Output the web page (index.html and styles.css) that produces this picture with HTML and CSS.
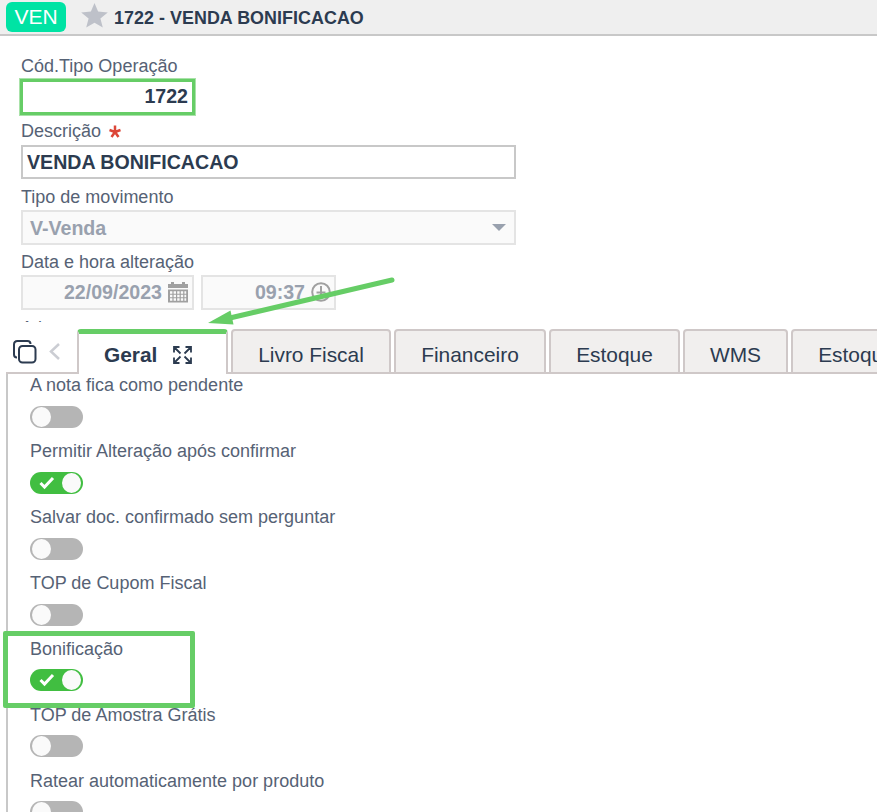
FILE: index.html
```html
<!DOCTYPE html>
<html lang="pt-BR">
<head>
<meta charset="utf-8">
<title>VENDA BONIFICACAO</title>
<link rel="stylesheet" href="styles.css">
</head>
<body>
<div class="page">
  <header class="topbar">
    <span class="badge"><span>VEN</span></span>
    <svg class="star" width="27" height="25" viewBox="0 0 27 25"><path d="M13.500 0 17.100 8.600 26.800 9.400 19.400 15.600 21.800 24.600 13.500 19.700 5.200 24.600 7.600 15.600 0.200 9.400 9.900 8.600Z" fill="#bec1c9"/></svg>
    <h1 class="title"><span>1722 - VENDA BONIFICACAO</span></h1>
  </header>

  <main class="form">
    <div class="field">
      <label class="label">Cód.Tipo Operação</label>
      <div class="input code"><span>1722</span></div>
    </div>
    <div class="field">
      <label class="label">Descrição
        <svg class="required" width="12" height="13" viewBox="0 0 12 13"><path d="M6 7V0.500M6 7 11.500 5M6 7 9.500 12M6 7 2.500 12M6 7 0.500 5" stroke="#dc4638" stroke-width="2.500" fill="none"/></svg>
      </label>
      <div class="input wide"><span>VENDA BONIFICACAO</span></div>
    </div>
    <div class="field">
      <label class="label">Tipo de movimento</label>
      <div class="input wide disabled select"><span>V-Venda</span>
        <svg width="14" height="7" viewBox="0 0 14 7"><path d="M0 0H14L7 7Z" fill="#99a1ae"/></svg>
      </div>
    </div>
    <div class="field">
      <label class="label">Data e hora alteração</label>
      <div class="pair">
        <div class="input disabled date"><span>22/09/2023</span>
          <svg width="20" height="21" viewBox="0 0 20 21"><path fill="#a0a0a0" d="M0 2H3V0H6V2H14V0H17V2H20V6H0ZM0 7.500H20V20.500H0Z"/><path stroke="#fafafa" stroke-width="2.400" stroke-dasharray="2.400 1.200" d="M2 10.500H18.200M2 14H18.200M2 17.500H18.200"/></svg>
        </div>
        <div class="input disabled time"><span>09:37</span>
          <svg width="20" height="20" viewBox="0 0 20 20"><circle cx="10" cy="10" r="8.800" fill="none" stroke="#a0a0a0" stroke-width="2"/><path d="M10 4V14M5.500 10.500H14.500" stroke="#a0a0a0" stroke-width="2"/></svg>
        </div>
      </div>
    </div>
    <div class="field"><label class="label">Ativo</label></div>
  </main>

  <nav class="tabs">
    <div class="tools">
      <svg width="24" height="24" viewBox="0 0 24 24" fill="none" stroke="#2c3b50" stroke-width="2"><rect x="6" y="6" width="16.500" height="16.500" rx="3.500"/><path d="M4 17.500C2 17.500 1 16.500 1 14.500V4.500C1 2.300 2.300 1 4.500 1H14.500C16.500 1 17.500 2 17.500 4"/></svg>
      <svg class="prev" width="11" height="17" viewBox="0 0 11 17" fill="none" stroke="#cbcdd3" stroke-width="2.500"><path d="M10 1 2 8.500 10 16"/></svg>
    </div>
    <div class="tab active"><span>Geral</span>
      <svg width="19" height="18" viewBox="0 0 19 18" fill="none" stroke="#2c3b50" stroke-width="1.800"><path d="M6.500 1H1V6.500M1 1 7.500 7.500M12.500 1H18V6.500M18 1 11.500 7.500M6.500 17H1V11.500M1 17 7.500 10.500M12.500 17H18V11.500M18 17 11.500 10.500"/></svg>
    </div>
    <div class="tab t-livro">Livro Fiscal</div>
    <div class="tab t-fin">Financeiro</div>
    <div class="tab t-est">Estoque</div>
    <div class="tab t-wms">WMS</div>
    <div class="tab t-last">Estoque</div>
  </nav>

  <section class="panel">
    <div class="option"><label class="label">A nota fica como pendente</label><div class="switch"><i></i></div></div>
    <div class="option"><label class="label">Permitir Alteração após confirmar</label><div class="switch on"><svg width="16" height="14" viewBox="0 0 16 14"><path d="M1.500 7 5.500 11 14 2" fill="none" stroke="#fff" stroke-width="3"/></svg><i></i></div></div>
    <div class="option"><label class="label">Salvar doc. confirmado sem perguntar</label><div class="switch"><i></i></div></div>
    <div class="option"><label class="label">TOP de Cupom Fiscal</label><div class="switch"><i></i></div></div>
    <div class="option"><label class="label">Bonificação</label><div class="switch on"><svg width="16" height="14" viewBox="0 0 16 14"><path d="M1.500 7 5.500 11 14 2" fill="none" stroke="#fff" stroke-width="3"/></svg><i></i></div></div>
    <div class="option"><label class="label">TOP de Amostra Grátis</label><div class="switch"><i></i></div></div>
    <div class="option"><label class="label">Ratear automaticamente por produto</label><div class="switch"><i></i></div></div>
  </section>

  <div class="highlight"></div>
  <svg class="arrow" width="190" height="52" viewBox="0 0 190 52"><path d="M184 7 24 44.500" stroke="#66cd66" stroke-width="5" stroke-linecap="round"/><path d="M0 50 22.500 37.500 25.500 51.500Z" fill="#66cd66"/></svg>
</div>
</body>
</html>
```

FILE: styles.css
```css
* { box-sizing: border-box; }
body {
  margin: 0;
  background: #fff;
  font-family: "Liberation Sans", Arial, sans-serif;
  color: #2c3b50;
}
svg { flex: none; display: block; }
.page {
  position: relative;
  height: 812px;
  overflow: hidden;
  display: flex;
  flex-direction: column;
}

/* Top bar */
.topbar {
  flex: none;
  height: 36px;
  display: flex;
  align-items: flex-start;
  background: #efefef;
  border-bottom: 2px solid #c8c8c8;
}
.badge {
  width: 60px;
  height: 30px;
  margin: 2px 0 0 6px;
  border-radius: 6px;
  background: #00e3a4;
  color: #fff;
  font-size: 21px;
  line-height: 30px;
  text-align: center;
}
.star { margin: 3px 0 0 15px; }
.title {
  margin: 7px 0 0 6px;
  font-size: 17.900px;
  letter-spacing: 0.04px;
  line-height: 22px;
  white-space: nowrap;
}

/* Form */
.form {
  flex: none;
  height: 286px;
  padding: 17.500px 0 0 21px;
  overflow: hidden;
}
.field { height: 65.500px; }
.label {
  display: flex;
  align-items: center;
  height: 25px;
  color: #566275;
  font-size: 18px;
  white-space: nowrap;
}
.required { margin-left: 8px; }
.input {
  display: flex;
  align-items: center;
  height: 34px;
  margin-top: 1px;
  border: 2px solid #c8c8c8;
  font-size: 19.600px;
  font-weight: bold;
  line-height: 30px;
  white-space: nowrap;
}
.wide { width: 495px; padding-left: 4px; }
.code {
  width: 175px;
  height: 36px;
  margin: 0 0 0 -1px;
  justify-content: flex-end;
  padding: 0 4px 1px 0;
  border: 3px solid #66cd66;
  outline: 1px solid #a9e2a9;
}
.disabled {
  height: 35px;
  margin-top: -0.200px;
  border-color: #e4e4e4;
  background: #fafafa;
  color: #99a1ae;
}
.select { justify-content: space-between; margin-top: 0.500px; padding: 0 8px 0 7px; }
.pair { display: flex; gap: 7px; }
.date, .time { justify-content: flex-end; padding-right: 4px; }
.date { width: 173px; gap: 6px; }
.time { width: 135px; gap: 6px; padding-right: 3px; }

/* Tabs */
.tabs {
  flex: none;
  height: 52px;
  display: flex;
  align-items: flex-end;
  margin-left: 6px;
  background: linear-gradient(#cfc8c8, #cfc8c8) bottom / 100% 2px no-repeat;
}
.tools {
  flex: none;
  width: 71px;
  height: 45px;
  display: flex;
  align-items: center;
  padding-left: 7px;
}
.prev { margin-left: 12px; }
.tab {
  flex: none;
  height: 45px;
  margin-right: 3px;
  padding-top: 5px;
  border: 2px solid #cfc8c8;
  border-radius: 4px 4px 0 0;
  background: #f1efee;
  font-size: 20.900px;
  line-height: 38px;
  text-align: center;
  white-space: nowrap;
}
.active {
  display: flex;
  align-items: center;
  width: 151px;
  gap: 16px;
  padding: 1px 0 0 25px;
  border-top: 5px solid #66cd66;
  border-bottom: 0;
  background: #fff;
  font-weight: bold;
}
.t-livro { width: 160px; }
.t-fin { width: 152px; }
.t-est { width: 131px; }
.t-wms { width: 105px; }
.t-last { width: 131px; }

/* Options */
.panel {
  flex: 1;
  min-height: 0;
  overflow: hidden;
  margin-left: 6px;
  padding-left: 22px;
  border-left: 2px solid #c8c8c8;
}
.option { height: 66px; }
.option .label { height: 22px; }
.switch {
  display: flex;
  align-items: center;
  width: 53px;
  height: 22px;
  margin-top: 9.500px;
  padding: 0 2px;
  border-radius: 11px;
  background: #b5b5b5;
}
.switch i { width: 19px; height: 20px; border-radius: 50%; background: #fafafa; }
.on { background: #41be41; padding-left: 9px; justify-content: space-between; }
.option:nth-child(n+5) .switch { margin-top: 9px; }

/* Annotations over the form */
.highlight {
  position: absolute;
  left: 3px;
  top: 631px;
  width: 192px;
  height: 77px;
  border: 5px solid #66cd66;
  border-radius: 2px;
}
.arrow { position: absolute; left: 208px; top: 273px; }
```
